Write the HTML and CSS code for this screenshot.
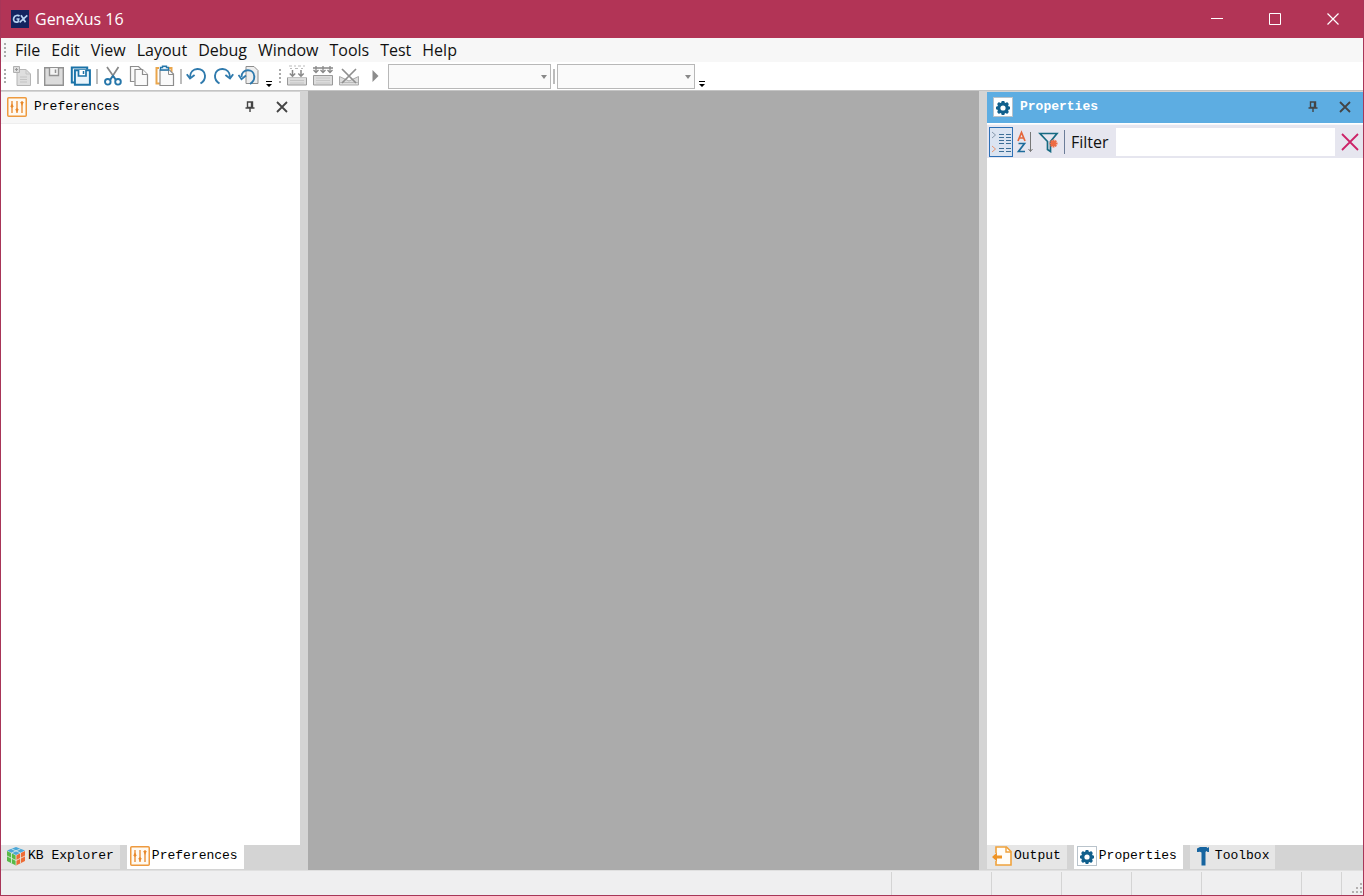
FILE: index.html
```html
<!DOCTYPE html>
<html lang="en">
<head>
<meta charset="utf-8">
<title>GeneXus 16</title>
<link rel="stylesheet" href="styles.css">
</head>
<body>
<svg class="defs" aria-hidden="true">
  <symbol id="i-sliders" viewBox="0 0 20 20">
    <rect x=".75" y=".75" width="18.5" height="18.5" rx="1" fill="#fffaf2" stroke="#ee9a3f" stroke-width="1.5"/>
    <path d="M5 4v12M10 4v12M15 4v12" stroke="#e8892b" stroke-width="1.3"/>
    <path d="M3.3 9.5L5 6.5l1.700 3L5 11zM8.300 12.500L10 11l1.700 1.500L10 15.500zM13.200 5h3.600L15 9z" fill="#e8892b"/>
  </symbol>
  <symbol id="i-gear" viewBox="0 0 20 20">
    <rect x=".5" y=".5" width="19" height="19" fill="#fff" stroke="#b9c3cb"/>
    <path d="M8.700 4h2.600l.4 1.500 1 .4 1.400-.8 1.800 1.800-.8 1.400.4 1 1.500.4v2.600l-1.500.4-.4 1 .8 1.400-1.800 1.800-1.400-.8-1 .4-.4 1.500H8.700l-.4-1.500-1-.4-1.400.8-1.800-1.800.8-1.400-.4-1L3 12.300V9.700l1.500-.4.4-1-.8-1.400 1.800-1.800 1.400.8 1-.4z" fill="#105f8c"/>
    <circle cx="10" cy="11" r="2.600" fill="#fff"/>
  </symbol>
  <symbol id="i-pin" viewBox="0 0 10 12">
    <path d="M2.500 1h5v5.500h-5zM6.500 1v5.500M.5 7h9M5 7v4" fill="none" stroke="currentColor" stroke-width="1.400"/>
  </symbol>
  <symbol id="i-close" viewBox="0 0 12 12">
    <path d="M1 1l10 10M11 1L1 11" stroke="currentColor" stroke-width="1.800"/>
  </symbol>
  <symbol id="i-more" viewBox="0 0 6 6"><path d="M0 0h6v1H0zM0 3h6L3 6z" fill="#000"/></symbol>
  <symbol id="i-down" viewBox="0 0 6 4"><path d="M0 0h6L3 4z" fill="#888"/></symbol>
</svg>
<div class="window">
  <header class="titlebar">
    <svg class="logo" width="18" height="18" viewBox="0 0 18 18" role="img" aria-label="GX">
      <rect width="18" height="18" fill="#14235f"/>
      <path d="M8.500 6.300C7.500 4.900 3.500 5 2.700 8.200 1.900 11.300 4 12.600 7 11.900L7.700 9H5.500M10 5.300l4.500 7M16.300 5.300L8.600 12.300" fill="none" stroke="#b9d2f2" stroke-width="1.700"/>
    </svg>
    <h1 class="title">GeneXus 16</h1>
    <button class="win-btn" aria-label="Minimize"><svg width="14" height="14"><path d="M1 6.500h12" stroke="#fff"/></svg></button>
    <button class="win-btn" aria-label="Maximize"><svg width="14" height="14"><path d="M1.500 1.500h11v11h-11z" fill="none" stroke="#fff"/></svg></button>
    <button class="win-btn" aria-label="Close"><svg width="14" height="14"><path d="M1.500 1.500l11 11M12.500 1.500l-11 11" stroke="#fff" stroke-width="1.200"/></svg></button>
  </header>
  <nav class="menubar" aria-label="Main menu">
    <span class="grip"></span>
    <button class="menu">File</button><button class="menu">Edit</button><button class="menu">View</button><button class="menu">Layout</button><button class="menu">Debug</button><button class="menu">Window</button><button class="menu">Tools</button><button class="menu">Test</button><button class="menu">Help</button>
  </nav>
  <div class="toolbar" role="toolbar" aria-label="Standard">
    <span class="grip"></span>
    <button class="tool" aria-label="New"><svg width="22" height="22" viewBox="0 0 22 22"><path d="M6 4.500h9l4.500 4.500v11.500H6z" fill="#dedede" stroke="#b5b5b5"/><path d="M15 4.500V9h4.500M9 12h7M9 14.500h7M9 17h7" fill="none" stroke="#c4c4c4"/><path d="M2.500 1.500h6v6h-6z" fill="#ddd" stroke="#b0b0b0"/><path d="M5.500 3v3M4 4.500h3" stroke="#999"/></svg></button>
    <span class="sep"></span>
    <button class="tool" aria-label="Save"><svg width="22" height="22" viewBox="0 0 22 22"><path d="M1.700 2.700h18.600v17.600H1.700z" fill="#dcdcdc" stroke="#929292" stroke-width="1.400"/><path d="M6.500 3v7.500h9V3" fill="#f4f4f4" stroke="#929292" stroke-width="1.400"/><path d="M12.500 4.500v3.500" stroke="#929292" stroke-width="1.500"/></svg></button>
    <button class="tool spaced" aria-label="Save all"><svg width="22" height="22" viewBox="0 0 22 22"><path d="M4 17.500H1.800V2.500h15.400v2" fill="none" stroke="#1b73a8" stroke-width="2"/><path d="M4.900 5.200h15v14.600h-15z" fill="#e9f4fb" stroke="#1b73a8" stroke-width="2"/><path d="M8.500 5v6h7.500V5" fill="#fff" stroke="#1b73a8" stroke-width="1.700"/><path d="M13.500 6v3" stroke="#1b73a8" stroke-width="1.500"/></svg></button>
    <span class="sep"></span>
    <button class="tool" aria-label="Cut"><svg width="22" height="22" viewBox="0 0 22 22" fill="none"><path d="M5 2l9 13M16.500 2L8 15" stroke="#888" stroke-width="1.700"/><circle cx="5.800" cy="16.800" r="2.800" stroke="#2576aa" stroke-width="1.900"/><circle cx="16" cy="16.800" r="2.800" stroke="#2576aa" stroke-width="1.900"/><path d="M8 15l3-4 3 4" stroke="#2576aa" stroke-width="1.700"/></svg></button>
    <button class="tool" aria-label="Copy"><svg width="22" height="22" viewBox="0 0 22 22" fill="#fafafa" stroke="#8d8d8d" stroke-width="1.200"><path d="M6.500 16.500h-4v-15h8l3 3"/><path d="M7 4.500h7.500L19.500 9.500v11H7z"/><path d="M14.500 4.500v5h5"/></svg></button>
    <button class="tool" aria-label="Paste"><svg width="22" height="22" viewBox="0 0 22 22" fill="none"><path d="M5 3H2.500v15.500H6M15 3h2.500v4" stroke="#eaa64c" stroke-width="2"/><path d="M6 5h9.500l4 4v11.500H6z" fill="#fafafa" stroke="#8d8d8d" stroke-width="1.200"/><path d="M14.500 5.500v4h5" stroke="#8d8d8d"/><path d="M6.500 5V2.500h2V1.200h4v1.300h2V5z" fill="#e6f2f9" stroke="#2576aa" stroke-width="1.400"/></svg></button>
    <span class="sep"></span>
    <button class="tool" aria-label="Undo"><svg width="22" height="22" viewBox="0 0 22 22"><path d="M4 12C4 1.500 18.500 1.500 19 10.500c.2 3.500-2 6.500-4.500 8" fill="none" stroke="#2f7aad" stroke-width="1.900"/><path d="M.8 9.200L4 13.500l4.600-3.500" fill="none" stroke="#2f7aad" stroke-width="1.900"/></svg></button>
    <button class="tool" aria-label="Redo"><svg width="22" height="22" viewBox="0 0 22 22"><path d="M18 12C18 1.500 3.500 1.500 3 10.500c-.2 3.500 2 6.500 4.500 8" fill="none" stroke="#2f7aad" stroke-width="1.900"/><path d="M21.200 9.200L18 13.500l-4.600-3.500" fill="none" stroke="#2f7aad" stroke-width="1.900"/></svg></button>
    <button class="tool" aria-label="Revert"><svg width="22" height="22" viewBox="0 0 22 22"><path d="M8 5V1.500h8l4 4v13H8z" fill="#eee" stroke="#8d8d8d"/><path d="M3.500 12C3.500 3 16 3 16.300 11.500c.1 3.500-1.800 6-4.300 7.500" fill="none" stroke="#2f7aad" stroke-width="1.900"/><path d="M.5 10l3 4.200L8 10.500" fill="none" stroke="#2f7aad" stroke-width="1.800"/></svg></button>
    <button class="more" aria-label="More standard buttons"><svg width="6" height="6"><use href="#i-more"/></svg></button>
    <span class="grip"></span>
    <button class="tool" aria-label="Build"><svg width="22" height="22" viewBox="0 0 22 22" fill="none" stroke="#999"><path d="M1.500 12.500v7.500h19v-7.500" fill="#ddd"/><path d="M1.500 12.500h19M4 15.500h14M4 18h14" stroke="#c4c4c4"/><path d="M3 1h3M8 1h2M12 1h3M17 1h2M4 3.500h2M9 3.500h3M15 3.500h2" stroke="#bbb"/><path d="M6.500 5v6M3.800 8.500l2.700 2.700 2.700-2.700M15 5v6M12.300 8.500l2.700 2.700 2.700-2.700" stroke-width="1.500" stroke="#888"/></svg></button>
    <button class="tool" aria-label="Rebuild all"><svg width="22" height="22" viewBox="0 0 22 22" fill="none" stroke="#999"><path d="M1.500 10.500h19V20h-19z" fill="#ddd"/><path d="M4 13h14M4 15.500h14M4 18h14" stroke="#c8c8c8"/><path d="M1 3h20M4 1v6M1.500 5L4 7.500 6.500 5M11 1v6M8.500 5L11 7.500 13.500 5M18 1v6M15.500 5L18 7.500 20.500 5" stroke="#888" stroke-width="1.300"/></svg></button>
    <button class="tool" aria-label="Cancel build"><svg width="22" height="22" viewBox="0 0 22 22" fill="none"><path d="M1.500 11.500V20h19v-8.500L11 16z" fill="#ddd" stroke="#aaa"/><path d="M2 17.500h18" stroke="#bbb"/><path d="M4 4l14 14M18 4L4 18" stroke="#8f8f8f" stroke-width="1.700"/></svg></button>
    <button class="tool" aria-label="Run"><svg width="22" height="22" viewBox="0 0 22 22"><path d="M8.500 5l6 6-6 6z" fill="#8c8c8c"/></svg></button>
    <span class="combo combo-wide"><select class="select" aria-label="Environment"><option></option></select><svg class="arrow" width="6" height="4"><use href="#i-down"/></svg></span>
    <span class="sep"></span>
    <span class="combo"><select class="select" aria-label="Configuration"><option></option></select><svg class="arrow" width="6" height="4"><use href="#i-down"/></svg></span>
    <button class="more" aria-label="More build buttons"><svg width="6" height="6"><use href="#i-more"/></svg></button>
  </div>
  <main class="workspace">
    <section class="dock dock-left" aria-label="Preferences panel">
      <header class="dock-head">
        <svg width="20" height="20"><use href="#i-sliders"/></svg>
        <h2 class="dock-title">Preferences</h2>
        <button class="dock-btn" aria-label="Pin"><svg width="10" height="12"><use href="#i-pin"/></svg></button>
        <button class="dock-btn" aria-label="Close panel"><svg width="12" height="12"><use href="#i-close"/></svg></button>
      </header>
      <div class="dock-body"></div>
      <nav class="tabs" aria-label="Left panels">
        <button class="tab"><svg width="20" height="20" viewBox="0 0 20 20"><path d="M10 1l9 3.500-9 4.500-9-4.500z" fill="#4ba7d8"/><path d="M1 5l9 4.500v10L1 15z" fill="#58b947"/><path d="M19 5l-9 4.500v10l9-4.500z" fill="#ed6b35"/><path d="M5.500 2.800L14.500 7v10M14.500 2.800L5.500 7v10M1 10l9 4.500 9-4.500M10 9v10" fill="none" stroke="#e4eee9" stroke-width=".8"/></svg>KB Explorer</button>
        <button class="tab tab-active"><svg width="20" height="20"><use href="#i-sliders"/></svg>Preferences</button>
      </nav>
    </section>
    <div class="canvas"></div>
    <section class="dock dock-right" aria-label="Properties panel">
      <header class="dock-head dock-head-active">
        <svg width="20" height="20"><use href="#i-gear"/></svg>
        <h2 class="dock-title">Properties</h2>
        <button class="dock-btn" aria-label="Pin"><svg width="10" height="12"><use href="#i-pin"/></svg></button>
        <button class="dock-btn" aria-label="Close panel"><svg width="12" height="12"><use href="#i-close"/></svg></button>
      </header>
      <div class="filterbar">
        <button class="prop-btn prop-btn-on" aria-label="Categorized"><svg width="22" height="26" viewBox="0 0 22 26" fill="none"><path d="M2 3l3.500 3L2 9" stroke="#8799ad"/><path d="M2 17l3.500 3L2 23" stroke="#e8956f"/><path d="M9 5.500h5M16 5.500h5M9 8.500h5M16 8.500h5M9 11.500h5M16 11.500h5M9 14.500h5M16 14.500h5M9 19.500h5M16 19.500h5M9 22.500h5M16 22.500h5" stroke="#3c6e96" stroke-width="1.200"/></svg></button>
        <button class="prop-btn" aria-label="Alphabetical"><svg width="18" height="24" viewBox="0 0 18 24" fill="none"><path d="M2 11L5.500 2.500 9 11M3.200 8h4.600" stroke="#e5673c" stroke-width="1.700"/><path d="M2.500 13.500h6l-6 8h6.500" stroke="#1e6c9c" stroke-width="1.700"/><path d="M14.500 2v19.500M12.500 19l2 2.500 2-2.500" stroke="#777"/></svg></button>
        <button class="prop-btn" aria-label="Only modified"><svg width="22" height="22" viewBox="0 0 22 22" fill="none"><path d="M2 2.500h17l-6.500 8v10l-3-2v-8z" stroke="#176a82" stroke-width="1.700"/><path d="M15.500 8.500v8M11.500 12.500h8M12.700 9.700l5.600 5.600M18.300 9.700l-5.600 5.600" stroke="#ed6b43" stroke-width="1.900"/></svg></button>
        <label class="filter-label" for="filter">Filter</label>
        <input class="filter-input" id="filter" type="text">
        <button class="clear" aria-label="Clear filter"><svg width="18" height="18"><path d="M1 1l16 16M17 1L1 17" stroke="#cc2268" stroke-width="1.800"/></svg></button>
      </div>
      <div class="dock-body"></div>
      <nav class="tabs" aria-label="Right panels">
        <button class="tab"><svg width="20" height="20" viewBox="0 0 20 20"><path d="M4 7V1h10.500L19 5.500V19H4v-4" fill="#fffdf8" stroke="#f0a23c" stroke-width="1.600"/><path d="M14 1v5h5" fill="none" stroke="#f0a23c" stroke-width="1.400"/><path d="M0 11l5-4.500v3h5v3H5v3z" fill="#ee9426"/></svg>Output</button>
        <button class="tab tab-active"><svg width="20" height="20"><use href="#i-gear"/></svg>Properties</button>
        <button class="tab tab-tool"><svg width="14" height="20" viewBox="0 0 14 20"><path d="M1 2.500L4 1h6.500l1 1L13 1v5h-1.500l-1-1-1 1v13.500h-4V6.500C4 5 2.500 6 1 6z" fill="#1765a0"/></svg>Toolbox</button>
      </nav>
    </section>
  </main>
  <footer class="status">
    <span class="cell"></span><span class="cell cell-l"></span><span class="cell cell-m"></span><span class="cell cell-m"></span><span class="cell cell-m"></span><span class="cell cell-l"></span><span class="cell cell-s"></span>
    <svg class="sizer" width="12" height="12"><path d="M9 0h2v2H9zM9 4h2v2H9zM5 4h2v2H5zM9 8h2v2H9zM5 8h2v2H5zM1 8h2v2H1z" fill="#b3b0b0"/></svg>
  </footer>
</div>
</body>
</html>
```

FILE: styles.css
```css
* { box-sizing: border-box; }
body { margin: 0; font: 16px/20px "Open Sans", "Noto Sans", sans-serif; color: #111; }
button { margin: 0; padding: 0; border: 0; background: none; font: inherit; color: inherit; }
svg { display: block; flex: none; }
.defs { position: absolute; width: 0; height: 0; }
.window { height: 100vh; display: flex; flex-direction: column; background: #fff; border: 1px solid #a83558; border-top: 0; }

.titlebar { height: 38px; flex: none; display: flex; align-items: center; padding: 0 1px 0 10px; background: #b23456; color: #fff; }
.title { flex: 1; margin: 0 0 0 6px; font-size: 16px; font-weight: 400; }
.win-btn { width: 58px; height: 38px; display: flex; align-items: center; justify-content: center; }

.menubar { height: 24px; flex: none; display: flex; align-items: center; background: #f7f7f7; }
.menu { padding: 0 5px 0 6px; }
.grip { width: 8px; height: 16px; flex: none; background: radial-gradient(circle, #aaa 1px, transparent 1px) 0 0 / 8px 4px; }

.toolbar { height: 29px; flex: none; display: flex; align-items: center; border-bottom: 1px solid #c4c4c4; }
.tool { width: 26px; height: 24px; flex: none; display: flex; align-items: center; justify-content: center; }
.spaced { margin-left: 1px; }
.sep { width: 2px; height: 15px; flex: none; margin: 0 2px; background: #bcbcbc; }
.more { width: 14px; height: 22px; flex: none; display: flex; align-items: flex-end; justify-content: center; }
.combo { position: relative; width: 138px; height: 25px; }
.combo-wide { width: 163px; }
.select { width: 100%; height: 100%; display: block; appearance: none; border: 1px solid #b8b8b8; border-radius: 0; background: #fafafa; }
.arrow { position: absolute; right: 4px; top: 11px; pointer-events: none; }

.workspace { flex: 1; min-height: 0; display: flex; background: #d4d4d4; }
.dock { display: flex; flex-direction: column; padding-top: 1px; }
.dock-left { width: 299px; }
.dock-right { width: 376px; }
.canvas { flex: 1; margin: 0 8px; background: #ababab; }
.dock-head { height: 32px; flex: none; display: flex; align-items: center; padding: 0 2px 1px 6px; background: #f7f7f7; border-bottom: 1px solid #eee; color: #444; }
.dock-head-active { background: #5dade2; border-bottom: 1px solid #fff; }
.dock-title { flex: 1; margin: 0 0 0 7px; font: 13px/20px "Liberation Mono", monospace; color: #000; }
.dock-head-active .dock-title { color: #fff; font-weight: 700; }
.dock-btn { width: 32px; height: 24px; display: flex; align-items: center; justify-content: center; }
.dock-body { flex: 1; background: #fff; }

.filterbar { height: 34px; flex: none; display: flex; align-items: center; padding: 0 4px 0 2px; background: #e6e6ef; border-top: 1px solid #f7f7fa; }
.prop-btn { width: 24px; height: 30px; display: flex; align-items: center; justify-content: center; }
.prop-btn-on { border: 1px solid #2e70b5; background: #dbe4f1; }
.filter-label { margin: 0 7px 0 3px; padding-left: 6px; border-left: 1px solid #6c7d98; line-height: 24px; }
.filter-input { flex: 1; min-width: 0; height: 28px; border: 0; padding: 0 4px; background: #fff; font: inherit; }
.clear { margin-left: 6px; }

.tabs { height: 25px; flex: none; display: flex; align-items: flex-start; gap: 7px; background: #d4d4d4; font: 13px/20px "Liberation Mono", monospace; color: #000; }
.tab { height: 24px; display: flex; align-items: center; gap: 2px; padding: 0 6px 2px 5px; background: #e6e6e6; }
.tabs .tab-active { padding-left: 3px; background: #fff; }
.tabs .tab-tool { gap: 5px; padding-left: 6px; }

.status { height: 25px; flex: none; display: flex; background: #efeff0; border-top: 1px solid #e0e0e0; }
.cell { flex: 1; margin-top: 1px; border-right: 1px solid #d4d4d4; }
.cell-l { flex: 0 0 100px; }
.cell-m { flex: 0 0 70px; }
.cell-s { flex: 0 0 40px; }
.sizer { align-self: flex-end; margin-left: 9px; }
```
